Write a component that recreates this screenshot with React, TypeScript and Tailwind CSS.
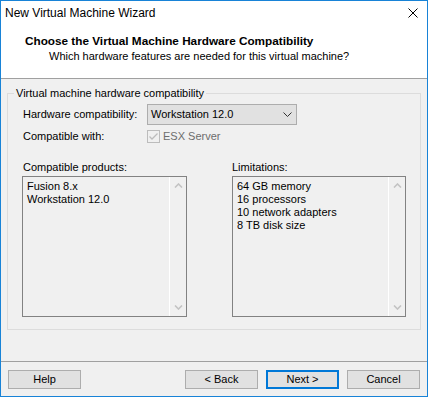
import React from 'react';

interface ListBoxProps {
    items: string[];
}

// disabled list with an inactive vertical scrollbar
const ListBox: React.FC<ListBoxProps> = ({ items }) => {
    return (
        <div className="mt-[1px] h-[141px] border border-[#828282] flex">
            <div className="flex-1 pl-[4px] pt-[3px]">
                {items.map((item) => (
                    <div key={item} className="leading-[13px]">{item}</div>
                ))}
            </div>
            <div className="w-[17px] border-l border-white flex flex-col justify-between items-center pt-[6px] pb-[6px]">
                <svg width="9" height="5" viewBox="0 0 9 5">
                    <polyline points="1,4.5 4.5,1 8,4.5" fill="none" stroke="#c3c3c3" strokeWidth="1.6" />
                </svg>
                <svg width="9" height="5" viewBox="0 0 9 5">
                    <polyline points="1,0.5 4.5,4 8,0.5" fill="none" stroke="#c3c3c3" strokeWidth="1.6" />
                </svg>
            </div>
        </div>
    );
};

const Button: React.FC<{ label: string; primary?: boolean }> = ({ label, primary }) => {
    return (
        <div
            className={
                primary
                    ? 'w-[73px] h-[19px] border-2 border-[#0078d7] bg-[#e1e1e1] flex items-center justify-center'
                    : 'w-[73px] h-[19px] border border-[#adadad] bg-[#e1e1e1] flex items-center justify-center'
            }
        >
            {label}
        </div>
    );
};

export default function App() {
    return (
        <div className="w-[428px] h-[397px] border border-[#1883d7] bg-[#f0f0f0] flex flex-col font-['Liberation_Sans',Arial,sans-serif] text-[11px] leading-[13px] text-black overflow-hidden">
            {/* title bar + header */}
            <div className="bg-white h-[77px] flex flex-col">
                <div className="h-[24px] flex items-center justify-between pl-[4px] pr-[9px]">
                    <span className="text-[12px]">New Virtual Machine Wizard</span>
                    <svg width="10" height="10" viewBox="0 0 10 10">
                        <path d="M0.5 0.5 L9.5 9.5 M9.5 0.5 L0.5 9.5" stroke="#000" strokeWidth="1" />
                    </svg>
                </div>
                <div className="mt-[8px] pl-[24px] font-bold text-[11.75px] leading-[15px]">
                    Choose the Virtual Machine Hardware Compatibility
                </div>
                <div className="mt-[1px] pl-[48px] leading-[15px]">
                    Which hardware features are needed for this virtual machine?
                </div>
            </div>
            <div className="border-t border-[#a0a0a0]" />

            {/* body */}
            <div className="flex-1 pt-[7px] px-[6px]">
                <fieldset className="border border-[#dcdcdc]">
                    <legend className="ml-[6px] px-[2px] leading-[14px]">Virtual machine hardware compatibility</legend>
                    <div className="px-[14px] pb-[12px]">
                        <div className="mt-[4px] h-[21px] flex items-center">
                            <div className="w-[125px] pl-[1px]">Hardware compatibility:</div>
                            <div className="w-[150px] h-[21px] border border-[#adadad] bg-[#e1e1e1] flex items-center justify-between pl-[3px] pr-[4px]">
                                <span>Workstation 12.0</span>
                                <svg width="9" height="5" viewBox="0 0 9 5">
                                    <polyline points="0.5,0.5 4.5,4.5 8.5,0.5" fill="none" stroke="#333" strokeWidth="1" />
                                </svg>
                            </div>
                        </div>
                        <div className="mt-[5px] h-[13px] flex items-center">
                            <div className="w-[125px] pl-[1px]">Compatible with:</div>
                            <div className="w-[13px] h-[13px] border border-[#bcbcbc] bg-[#f0f0f0] flex items-center justify-center">
                                <svg width="11" height="11" viewBox="0 0 11 11">
                                    <polyline points="1.5,5.5 4,8 9.5,2.5" fill="none" stroke="#bcbcbc" strokeWidth="1.3" />
                                </svg>
                            </div>
                            <span className="ml-[3px] text-[#6d6d6d]">ESX Server</span>
                        </div>
                        <div className="mt-[17px] flex justify-between">
                            <div className="w-[165px]">
                                <div className="leading-[15px] pl-[1px]">Compatible products:</div>
                                <ListBox items={['Fusion 8.x', 'Workstation 12.0']} />
                            </div>
                            <div className="w-[174px]">
                                <div className="leading-[15px]">Limitations:</div>
                                <ListBox items={['64 GB memory', '16 processors', '10 network adapters', '8 TB disk size']} />
                            </div>
                        </div>
                    </div>
                </fieldset>
            </div>

            {/* footer */}
            <div className="h-[35px] border-t border-[#a0a0a0] pt-[8px] px-[7px] flex items-start justify-between">
                <Button label="Help" />
                <div className="flex gap-[8px]">
                    <Button label="< Back" />
                    <Button label="Next >" primary />
                    <Button label="Cancel" />
                </div>
            </div>
        </div>
    );
}
